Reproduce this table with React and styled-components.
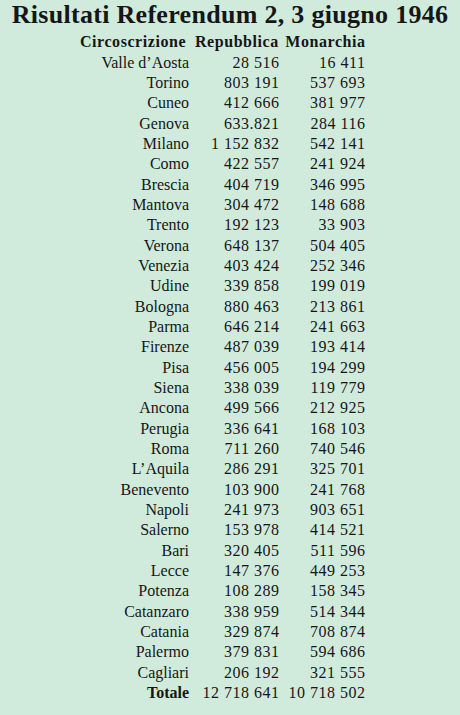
import React from 'react'
import styled, { createGlobalStyle } from 'styled-components'

const rows = [
    ['Valle d\u2019Aosta', '28 516', '16 411'],
    ['Torino', '803 191', '537 693'],
    ['Cuneo', '412 666', '381 977'],
    ['Genova', '633.821', '284 116'],
    ['Milano', '1 152 832', '542 141'],
    ['Como', '422 557', '241 924'],
    ['Brescia', '404 719', '346 995'],
    ['Mantova', '304 472', '148 688'],
    ['Trento', '192 123', '33 903'],
    ['Verona', '648 137', '504 405'],
    ['Venezia', '403 424', '252 346'],
    ['Udine', '339 858', '199 019'],
    ['Bologna', '880 463', '213 861'],
    ['Parma', '646 214', '241 663'],
    ['Firenze', '487 039', '193 414'],
    ['Pisa', '456 005', '194 299'],
    ['Siena', '338 039', '119 779'],
    ['Ancona', '499 566', '212 925'],
    ['Perugia', '336 641', '168 103'],
    ['Roma', '711 260', '740 546'],
    ['L\u2019Aquila', '286 291', '325 701'],
    ['Benevento', '103 900', '241 768'],
    ['Napoli', '241 973', '903 651'],
    ['Salerno', '153 978', '414 521'],
    ['Bari', '320 405', '511 596'],
    ['Lecce', '147 376', '449 253'],
    ['Potenza', '108 289', '158 345'],
    ['Catanzaro', '338 959', '514 344'],
    ['Catania', '329 874', '708 874'],
    ['Palermo', '379 831', '594 686'],
    ['Cagliari', '206 192', '321 555'],
]

const App = () => {
    return (
        <Page>
            <GlobalStyle />
            <Title>Risultati Referendum 2, 3 giugno 1946</Title>
            <Table>
                <Head>Circoscrizione</Head>
                <Head indent>Repubblica</Head>
                <Head right>Monarchia</Head>
                {rows.map(([name, rep, mon]) => (
                    <React.Fragment key={name}>
                        <Name>{name}</Name>
                        <Num>{rep}</Num>
                        <Num>{mon}</Num>
                    </React.Fragment>
                ))}
                <Name bold>Totale</Name>
                <Num>12 718 641</Num>
                <Num>10 718 502</Num>
            </Table>
        </Page>
    )
}

export default App

const GlobalStyle = createGlobalStyle`
    html, body {
        margin: 0;
        padding: 0;
        background: #d0ebdc;
    }
`
const Page = styled.div`
    width: 460px;
    height: 715px;
    background: #d0ebdc;
    color: #161616;
    font-family: "Liberation Serif", "DejaVu Serif", serif;
    overflow: hidden;
`
const Title = styled.h1`
    margin: 0;
    text-align: center;
    font-size: 26px;
    line-height: 30px;
    letter-spacing: 0.3px;
    font-weight: 700;
`
const Table = styled.div`
    display: grid;
    grid-template-columns: 112px 87px 86px;
    grid-auto-rows: 20.35px;
    margin: 2px 0 0 80px;
    align-items: center;
`
const Head = styled.div`
    font-size: 16px;
    font-weight: 700;
    letter-spacing: 0.55px;
    white-space: nowrap;
    text-align: ${p => p.right ? 'right' : 'left'};
    padding-left: ${p => p.indent ? '3px' : '0'};
    margin-right: ${p => p.right ? '-0.55px' : '0'};
`
const Name = styled.div`
    text-align: right;
    padding-right: 3px;
    font-size: 16px;
    font-weight: ${p => p.bold ? 700 : 400};
    white-space: nowrap;
`
const Num = styled.div`
    text-align: right;
    font-size: 16px;
    letter-spacing: 0.5px;
    margin-right: -0.5px;
    white-space: nowrap;
`
